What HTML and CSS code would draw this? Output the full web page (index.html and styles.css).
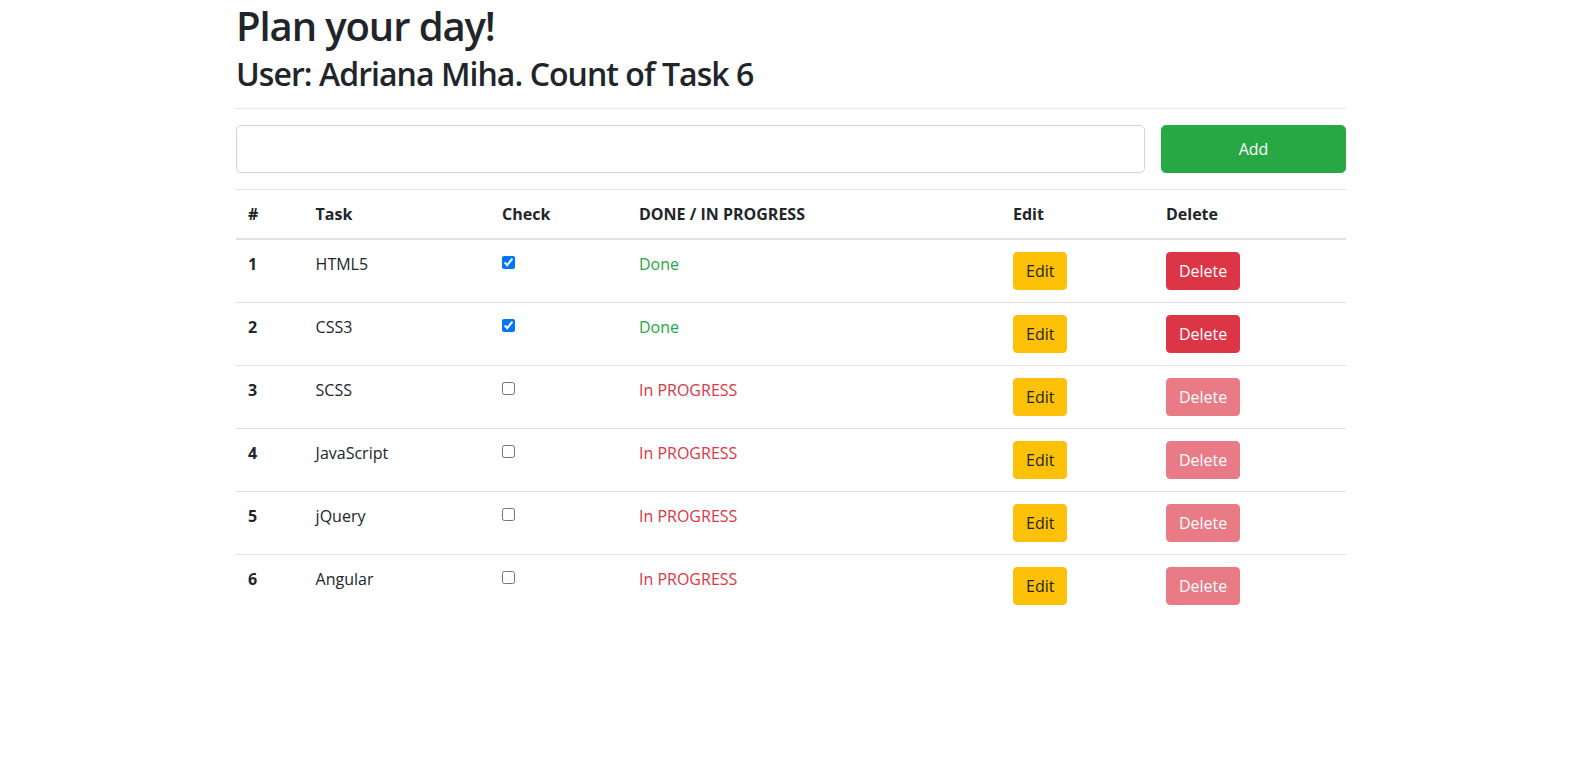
FILE: index.html
```html
<!DOCTYPE html>
<html lang="en">
<head>
<meta charset="utf-8">
<title>Plan your day!</title>
<link rel="stylesheet" href="styles.css">
</head>
<body>
<div class="container">
  <h1 class="title">Plan your day!</h1>
  <h2 class="subtitle">User: Adriana Miha. Count of Task 6</h2>
  <hr class="divider">
  <div class="add-row">
    <input class="task-input" type="text">
    <button class="btn btn-add">Add</button>
  </div>
  <table class="tasks">
    <colgroup>
      <col style="width:67.6px">
      <col style="width:186.4px">
      <col style="width:137px">
      <col style="width:374px">
      <col style="width:153px">
      <col style="width:192px">
    </colgroup>
    <thead>
      <tr><th>#</th><th>Task</th><th>Check</th><th>DONE / IN PROGRESS</th><th>Edit</th><th>Delete</th></tr>
    </thead>
    <tbody>
      <tr><th>1</th><td>HTML5</td><td><input class="check" type="checkbox" checked></td><td class="done">Done</td><td><button class="btn btn-edit">Edit</button></td><td><button class="btn btn-delete">Delete</button></td></tr>
      <tr><th>2</th><td>CSS3</td><td><input class="check" type="checkbox" checked></td><td class="done">Done</td><td><button class="btn btn-edit">Edit</button></td><td><button class="btn btn-delete">Delete</button></td></tr>
      <tr><th>3</th><td>SCSS</td><td><input class="check" type="checkbox"></td><td class="progress">In PROGRESS</td><td><button class="btn btn-edit">Edit</button></td><td><button class="btn btn-delete disabled" disabled>Delete</button></td></tr>
      <tr><th>4</th><td>JavaScript</td><td><input class="check" type="checkbox"></td><td class="progress">In PROGRESS</td><td><button class="btn btn-edit">Edit</button></td><td><button class="btn btn-delete disabled" disabled>Delete</button></td></tr>
      <tr><th>5</th><td>jQuery</td><td><input class="check" type="checkbox"></td><td class="progress">In PROGRESS</td><td><button class="btn btn-edit">Edit</button></td><td><button class="btn btn-delete disabled" disabled>Delete</button></td></tr>
      <tr><th>6</th><td>Angular</td><td><input class="check" type="checkbox"></td><td class="progress">In PROGRESS</td><td><button class="btn btn-edit">Edit</button></td><td><button class="btn btn-delete disabled" disabled>Delete</button></td></tr>
    </tbody>
  </table>
</div>
</body>
</html>
```

FILE: styles.css
```css
* { box-sizing: border-box; }
html, body { margin: 0; padding: 0; background: #fff; }
body {
  font-family: "Open Sans", "Noto Sans", "Liberation Sans", sans-serif;
  font-size: 16px;
  line-height: 1.5;
  color: #212529;
  padding-right: 9px;
}
.container { width: 1110px; margin: 0 auto; }
.title {
  margin: 0;
  padding-top: 2px;
  font-size: 40px;
  font-weight: 600;
  line-height: 48px;
  letter-spacing: -1.1px;
}
.subtitle {
  margin: 0;
  font-size: 32px;
  font-weight: 600;
  line-height: 40px;
  padding-top: 4px;
  letter-spacing: -0.95px;
}
.divider {
  margin: 14px 0 0;
  border: 0;
  border-top: 1px solid rgba(0,0,0,.1);
  height: 0;
}
.add-row {
  display: flex;
  gap: 16px;
  margin-top: 16px;
}
.task-input {
  flex: 1;
  height: 48px;
  border: 1px solid #ced4da;
  border-radius: 4.8px;
  font-size: 20px;
  padding: 8px 16px;
  font-family: inherit;
}
.btn {
  display: inline-block;
  font-family: inherit;
  font-size: 16px;
  line-height: 24px;
  padding: 6px 12px;
  border: 1px solid transparent;
  border-radius: 4px;
  cursor: pointer;
}
.btn-add {
  width: 185px;
  height: 48px;
  background: #28a745;
  border-color: #28a745;
  color: #fff;
  border-radius: 4.8px;
}
.tasks {
  width: 100%;
  table-layout: fixed;
  border-collapse: collapse;
  margin-top: 16px;
}
.tasks th, .tasks td {
  padding: 12px;
  text-align: left;
  vertical-align: top;
  border-top: 1px solid #dee2e6;
  line-height: 24px;
}
.tasks th { font-weight: 700; }
.tasks thead th { border-bottom: 2px solid #dee2e6; }
.check { display: block; margin: 4px 0 0; width: 13px; height: 13px; }
.done { color: #28a745; }
.progress { color: #dc3545; }
.btn-edit { background: #ffc107; border-color: #ffc107; color: #212529; }
.btn-delete { background: #dc3545; border-color: #dc3545; color: #fff; }
.btn-delete.disabled { opacity: .65; cursor: default; }
```
